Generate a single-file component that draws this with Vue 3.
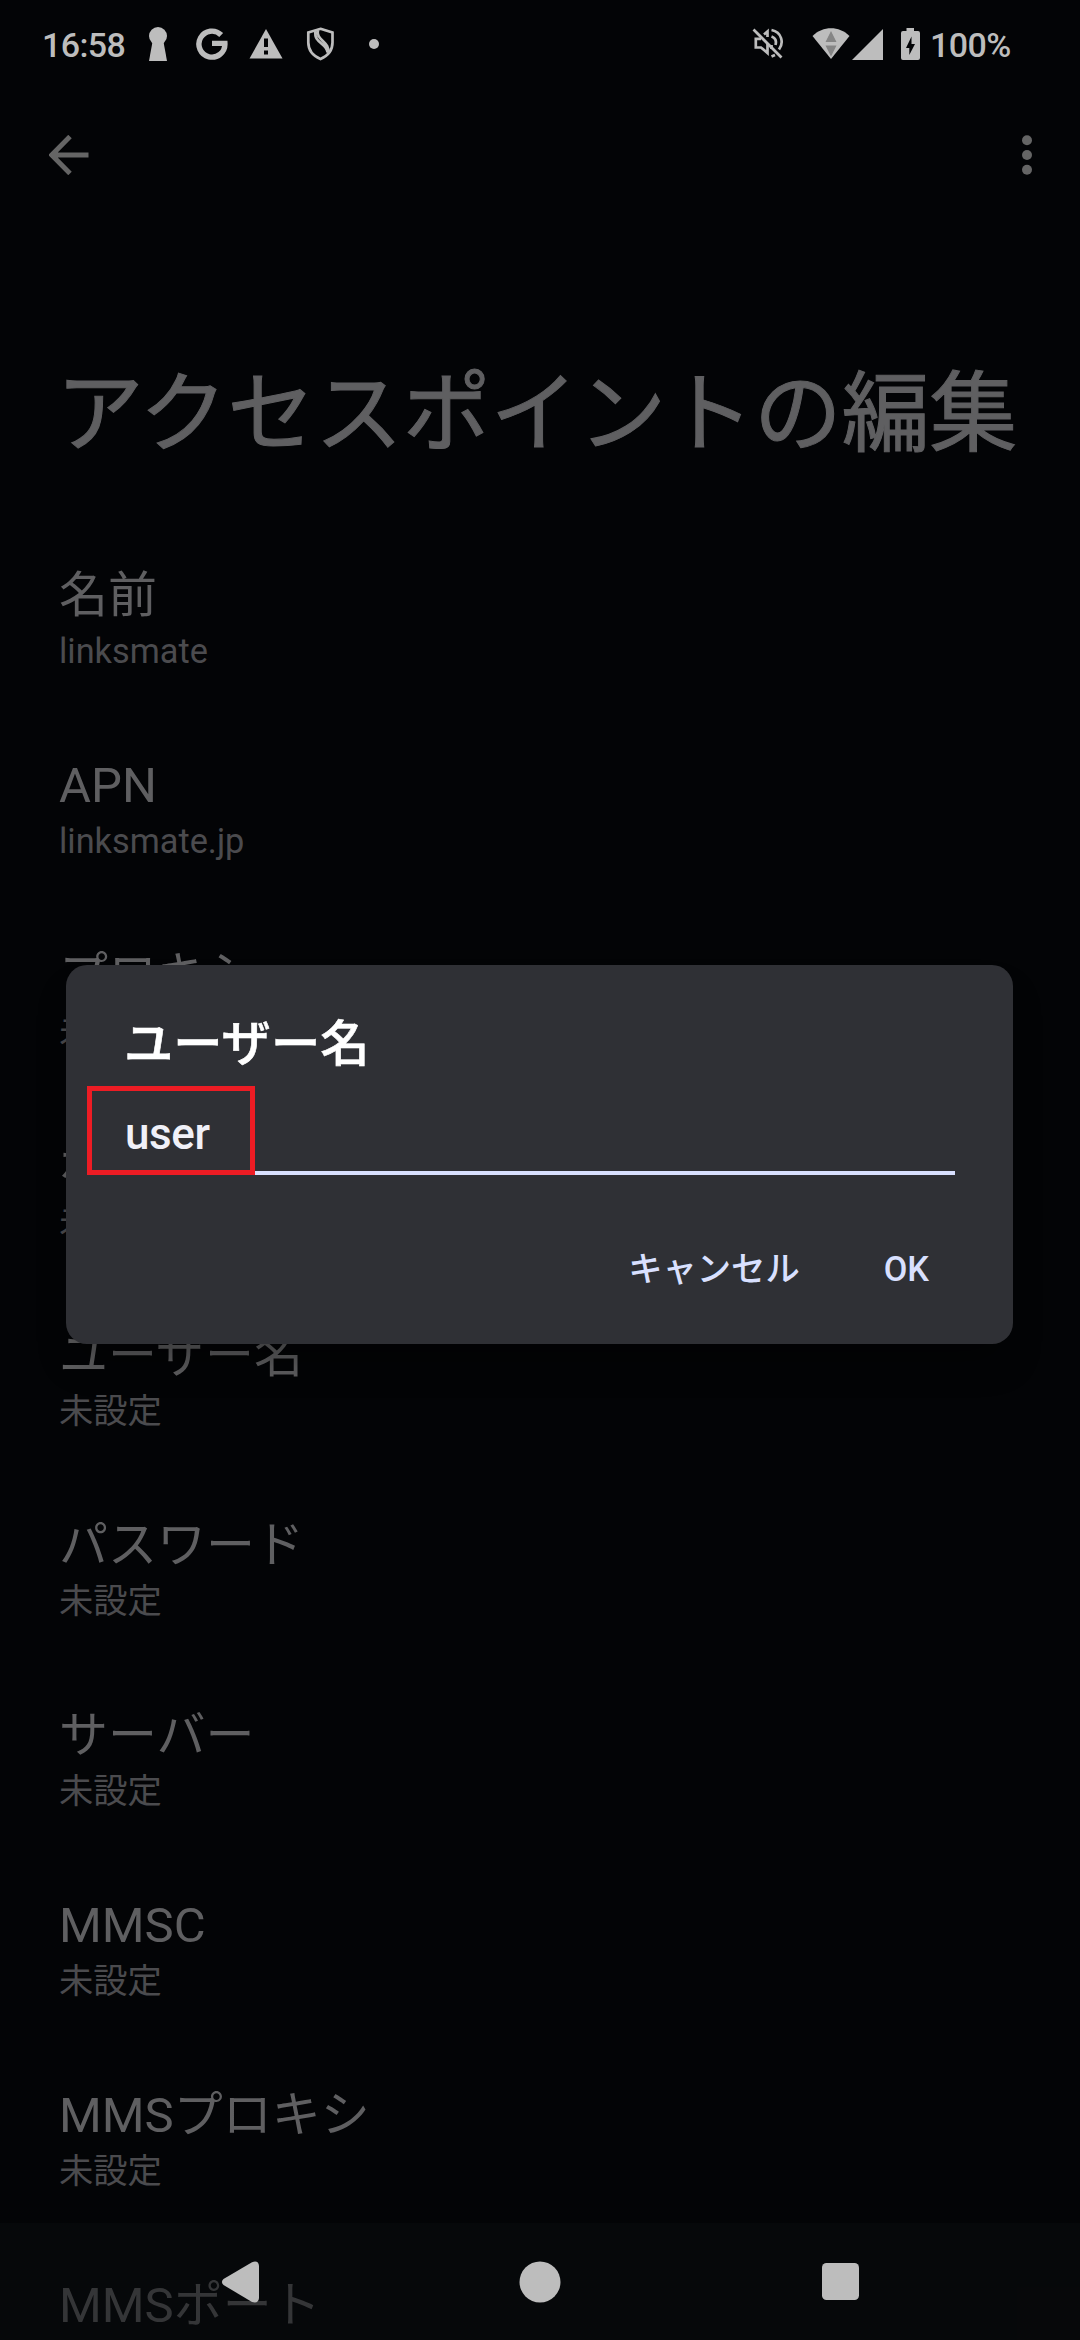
<script setup>
import { ref } from 'vue'

const items = ref([
    { label: '名前', value: 'linksmate' },
    { label: 'APN', value: 'linksmate.jp' },
    { label: 'プロキシ', value: '未設定' },
    { label: 'ポート', value: '未設定' },
    { label: 'ユーザー名', value: '未設定' },
    { label: 'パスワード', value: '未設定' },
    { label: 'サーバー', value: '未設定' },
    { label: 'MMSC', value: '未設定' },
    { label: 'MMSプロキシ', value: '未設定' },
    { label: 'MMSポート', value: '' },
])
const userName = ref('user')
</script>

<template>
    <div class="screen">
        <header class="status-bar">
            <span class="clock">16:58</span>
            <svg class="keyhole" width="18" height="34" viewBox="0 0 18 34">
                <circle cx="9" cy="9" r="9" />
                <path d="M4 12H14L18 34H0z" />
            </svg>
            <svg class="google" width="32" height="32" viewBox="0 0 32 32">
                <path class="line" d="M25.2 7A13 13 0 1 0 28.9 15.4H16" />
            </svg>
            <svg class="warning" width="34" height="30" viewBox="0 0 34 30">
                <path d="M17 0L33.5 29.5H0.500z" />
                <path class="cut" d="M15 9.500h4v8.500h-4zM15 21.500h4v4h-4z" />
            </svg>
            <svg class="shield" width="29" height="34" viewBox="0 0 29 34">
                <path class="line" d="M14.500 1.800L26.500 5.500V15.500C26.500 23.500 21.500 29 14.500 32C7.500 29 2.300 23.500 2.300 15.500V5.500z" />
                <path class="line" d="M9.500 4C7.500 16.500 21 16 21.500 25.500M12 3C9 13 25 15 22 26" />
            </svg>
            <svg class="dot" width="10" height="10" viewBox="0 0 10 10">
                <circle cx="5" cy="5" r="5" />
            </svg>
            <span class="spacer"></span>
            <svg class="muted" width="32" height="32" viewBox="0 0 32 32">
                <path class="line" d="M9 10.800H3.800V19.500H9L15.500 25V16M12 6.500L15.500 3.500V9M19.500 2C30 4 32 15 27 21.500M19.500 8.500C23.500 10 24.500 13.500 23.500 17M19.500 28.500L23 27M19.500 21V17" />
                <path class="line" d="M1.500 1.500L29.500 29.500" />
            </svg>
            <svg class="wifi" width="38" height="32" viewBox="0 0 38 32">
                <path d="M0.500 8C11-2.300 27-2.300 37.500 8L19 31z" />
                <path class="faint" d="M19 3l5.500 11h-11zM13.500 17.500h11L19 28.500z" />
            </svg>
            <svg class="signal" width="31" height="31" viewBox="0 0 31 31">
                <path d="M31 0V31H0z" />
            </svg>
            <svg class="battery" width="19" height="32" viewBox="0 0 19 32">
                <path d="M5.500 0H13V3H17Q19 3 19 5V30Q19 32 17 32H2Q0 32 0 30V5Q0 3 2 3H5.500z" />
                <path class="cut" d="M10.500 8.500V16H14L8.300 27V20H5z" />
            </svg>
            <span class="percent">100%</span>
        </header>

        <div class="toolbar">
            <svg width="40" height="40" viewBox="0 0 40 40">
                <path class="arrow" d="M39.500 20H4M21 1.500L2.800 20L21 38.500" />
            </svg>
            <svg width="10" height="40" viewBox="0 0 10 40">
                <circle cx="5" cy="5.300" r="5" />
                <circle cx="5" cy="20" r="5" />
                <circle cx="5" cy="34.700" r="5" />
            </svg>
        </div>

        <h1>アクセスポイントの編集</h1>

        <ul class="list">
            <li v-for="item in items" :key="item.label">
                <div class="label">{{ item.label }}</div>
                <div class="value">{{ item.value }}</div>
            </li>
        </ul>

        <nav class="nav-bar">
            <svg width="40" height="44" viewBox="0 0 40 44">
                <path d="M2.500 19L31 2.200Q37.500 0 38 6V38Q37.500 43.800 31 42L2.500 25Q-0.700 22 2.500 19z" />
            </svg>
            <svg class="home" width="42" height="42" viewBox="0 0 42 42">
                <circle cx="21" cy="21" r="20.500" />
            </svg>
            <svg width="37" height="37" viewBox="0 0 37 37">
                <rect width="37" height="37" rx="4.500" />
            </svg>
        </nav>

        <div class="dialog">
            <h2>ユーザー名</h2>
            <div class="field">
                <span>{{ userName }}</span>
                <div class="marker"></div>
            </div>
            <div class="actions">
                <button type="button">キャンセル</button>
                <button type="button">OK</button>
            </div>
        </div>
    </div>
</template>

<style>
body {
    margin: 0;
    background: #030406;
}
</style>

<style scoped>
.screen {
    position: relative;
    width: 1080px;
    height: 2340px;
    overflow: hidden;
    background: #030406;
    color: #5f5f61;
    font-family: Roboto, 'Noto Sans CJK JP', sans-serif;
}

svg {
    display: block;
    flex: none;
    fill: currentColor;
}

/* status bar */
.status-bar {
    display: flex;
    box-sizing: border-box;
    height: 88px;
    padding: 0 68px 0 42px;
    align-items: center;
    color: #bdbdbd;
    font-size: 34px;
    font-weight: 500;
    letter-spacing: -0.6px;
    line-height: 40px;
}

.clock {
    width: 107px;
    padding-top: 2px;
}

.percent {
    width: 82px;
    padding-top: 2px;
    white-space: nowrap;
}

.spacer {
    flex: 1;
}

.line {
    fill: none;
    stroke: currentColor;
    stroke-width: 2.7;
}

.cut {
    fill: #030406;
}

.faint {
    fill: #858585;
}

.google {
    margin-left: 29px;
}

.google .line {
    stroke-width: 5.4;
}

.warning {
    margin-left: 21px;
}

.shield {
    margin-left: 23px;
}

.dot {
    margin-left: 34px;
}

.muted {
    margin-right: 28px;
}

.signal {
    margin-left: 2px;
}

.battery {
    margin: 0 10px 0 18px;
}

.toolbar {
    display: flex;
    height: 133px;
    padding: 0 48px 0 49px;
    align-items: center;
    justify-content: space-between;
    color: #656565;
}

.arrow {
    fill: none;
    stroke: currentColor;
    stroke-width: 4.9;
}

h1 {
    height: 128px;
    margin: 129px 0 46px 56px;
    font-size: 87.8px;
    font-weight: 400;
    line-height: 128px;
    white-space: nowrap;
    -webkit-text-stroke: 1px;
}

/* settings */
.list {
    margin: 0;
    padding: 0;
    list-style: none;
}

.list li {
    box-sizing: border-box;
    height: 190px;
    padding: 43px 59px;
}

.label {
    font-size: 49px;
    line-height: 58px;
}

.value {
    margin-top: 6px;
    color: #4b4b4e;
    font-size: 34.3px;
    line-height: 40px;
}

.nav-bar {
    position: absolute;
    right: 0;
    bottom: 0;
    left: 0;
    display: flex;
    height: 117px;
    padding: 0 221px;
    align-items: center;
    justify-content: space-between;
    background: rgba(10, 11, 13, 0.5);
    color: #bdbdbd;
}

.home {
    margin-right: 4px;
}

/* dialog */
.dialog {
    position: absolute;
    top: 965px;
    left: 66px;
    box-sizing: border-box;
    width: 947px;
    height: 379px;
    padding: 50px 58px 0 59px;
    border-radius: 21px;
    background: #2f3035;
    box-shadow: 0 24px 36px -10px rgba(0, 0, 0, 0.4);
}

h2 {
    margin: 0 0 0 -1px;
    color: #fff;
    font-size: 49.3px;
    font-weight: 500;
    line-height: 58px;
    -webkit-text-stroke: 0.6px;
}

.field {
    position: relative;
    box-sizing: border-box;
    height: 102px;
    padding-top: 35px;
    border-bottom: 4px solid #d9e0ff;
    color: #f0f0f8;
    font-size: 44px;
    font-weight: 500;
    letter-spacing: -0.4px;
    line-height: 52px;
}

/* red frame round the typed name */
.marker {
    position: absolute;
    bottom: -4px;
    left: -38px;
    box-sizing: border-box;
    width: 168px;
    height: 89px;
    border: 5px solid #ed1c24;
}

.actions {
    display: flex;
    margin-top: 74px;
    padding-right: 26px;
    justify-content: flex-end;
    gap: 84px;
}

button {
    padding: 0;
    border: 0;
    background: none;
    color: #d9e0ff;
    font: 500 34.3px/40px Roboto, 'Noto Sans CJK JP', sans-serif;
}
</style>
